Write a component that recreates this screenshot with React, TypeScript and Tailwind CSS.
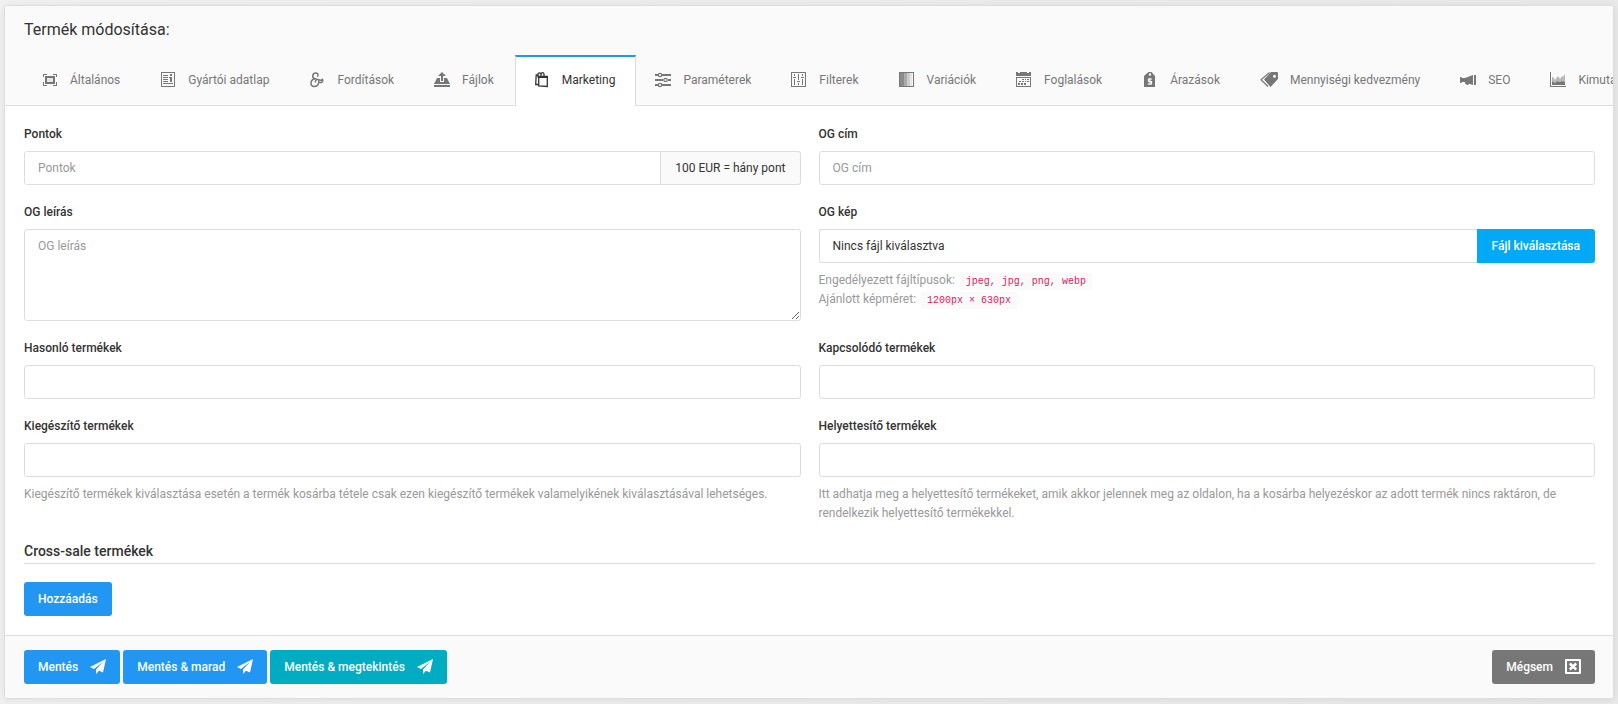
import { useRef, useState } from "react";
import type { ReactNode } from "react";
import clsx from "clsx";

function Icon({ children, width = 16 }: { children: ReactNode; width?: number }) {
  return (
    <svg
      viewBox={`0 0 ${width} 16`}
      width={width}
      height={16}
      fill="currentColor"
      aria-hidden="true"
      className="shrink-0"
    >
      {children}
    </svg>
  );
}

const FrameIcon = () => (
  <Icon>
    <path d="M1 2h4v1H2v2H1zM11 2h4v3h-1V3h-3zM1 10h1v3h3v1H1zM14 10h1v4h-4v-1h3z" />
    <path fillRule="evenodd" d="M3 4h10v8H3zM5 6v4h6V6z" />
    <path d="M5 6h6v4H5z" opacity=".15" />
  </Icon>
);

const ProfileIcon = () => (
  <Icon>
    <path fillRule="evenodd" d="M1 0h14v15H1zM2 1v13h12V1z" />
    <path d="M3 3h5v1H3zM3 5h5v1H3zM3 7h5v1H3zM3 9h5v1H3zM3 11h10v1H3zM10 2h2v2h-2zM9 5h3v5h-2V6H9z" />
  </Icon>
);

const AmpersandIcon = () => (
  <Icon>
    <path
      fill="none"
      stroke="currentColor"
      strokeWidth="1.500"
      strokeLinecap="round"
      strokeLinejoin="round"
      d="M8.800 4.300C9.600 2.300 8.500 1 6.800 1 3.200 1 2.600 6 6 6.800h1M6 6.800C.8 7.800.8 14.600 5 14.600c3.300 0 5-2.600 4.800-5.600M6.300 9.800C6.800 7.600 8.600 7 10.200 7.900c1.300.7 2.800.3 3.300-.7M11 10.500c2 .5 3.300-1.500 2.500-3.300"
    />
  </Icon>
);

const UploadIcon = () => (
  <Icon>
    <path d="M8 0l4 4H9v5H7V4H4zM3 6h3v4h4V6h3l3 6H0zM0 13h16v2H0z" />
  </Icon>
);

const BagIcon = () => (
  <Icon>
    <path
      fill="none"
      stroke="currentColor"
      strokeWidth="1.300"
      d="M4.700 4.500h8.600v10l-8.600-.6zM4.500 12.500H1.700l.5-9.500h2.500M4 5.500V2.500C4 .3 7 .3 7 2.500v3M7 3C7 0 10 0 10 2.500v3"
    />
    <path d="M5 4h9v2H5z" />
  </Icon>
);

const SlidersIcon = () => (
  <Icon>
    <path d="M0 2h3v2H0zM7 2h9v2H7zM0 7h8v2H0zM13 7h3v2h-3zM0 12h3v2H0zM7 12h9v2H7z" />
    <g fill="none" stroke="currentColor" strokeWidth="1.200">
      <circle cx="5" cy="3" r="1.700" />
      <circle cx="10.500" cy="8" r="1.700" />
      <circle cx="5" cy="13" r="1.700" />
    </g>
  </Icon>
);

const EqualizerIcon = () => (
  <Icon>
    <path fillRule="evenodd" d="M0 0h15v15H0zM1 1v13h13V1z" />
    <path d="M3 2h1v2H3zM2 5h3v1H2zM3 7h1v6H3zM7 2h1v6H7zM6 9h3v1H6zM7 11h1v2H7zM11 2h1v2h-1zM10 5h3v1h-3zM11 7h1v6h-1z" />
  </Icon>
);

const GradientIcon = () => (
  <Icon>
    <path fillRule="evenodd" d="M0 0h15v15H0zM1 1v13h13V1z" />
    <path d="M1 1h4v13H1z" opacity=".85" />
    <path d="M5 1h3v13H5z" opacity=".6" />
    <path d="M8 1h3v13H8z" opacity=".35" />
    <path d="M11 1h2v13h-2z" opacity=".15" />
  </Icon>
);

const CalendarIcon = () => (
  <Icon>
    <path d="M0 0h2v1h2V0h7v1h2V0h2v4H0z" />
    <path fillRule="evenodd" d="M0 5h15v10H0zM1 6v8h13V6z" />
    <path d="M6 7h2v1H6zM9 7h1v1H9zM11 7h2v1h-2zM3 9h2v1H3zM6 9h2v1H6zM9 9h1v1H9zM11 9h2v1h-2zM2 11h2v2H2zM5 11h2v2H5zM8 11h2v2H8z" />
  </Icon>
);

const PriceTagIcon = () => (
  <Icon>
    <path
      fillRule="evenodd"
      d="M6.500 0h3L13 4v11H2V4zM8 1.300a1.200 1.200 0 1 0 0 2.400 1.200 1.200 0 0 0 0-2.400z"
    />
    <path
      fill="none"
      stroke="#fafafa"
      strokeWidth="1.200"
      d="M10 7H6.500v2.500h3V12H5.500M8 6v7"
    />
  </Icon>
);

const TagsIcon = () => (
  <Icon width={18}>
    <path
      fillRule="evenodd"
      d="M11 0h6q1 0 1 1v6l-7.500 8L4 7.500zM14.500 2.800a1.500 1.500 0 1 0 0 3 1.500 1.500 0 0 0 0-3z"
    />
    <path
      fill="none"
      stroke="currentColor"
      strokeWidth="1.200"
      d="M9.500.5L1 7.800l7 6.700"
    />
  </Icon>
);

const MegaphoneIcon = () => (
  <Icon>
    <path d="M0 5h1l1 1h3l8-3v10l-4-1.200c-.5 1.700-3 1.700-4-.8V10H2l-1 1H0zM14 3h2v10h-2z" />
  </Icon>
);

const ChartIcon = () => (
  <Icon>
    <path d="M0 0h1v14h15v1H0z" />
    <path d="M2 9l3 2 2-2 3 1 2-1 3 1v3H2z" />
    <path
      d="M2 5l1 0 2 3 3-4 2 3 2-3 1 1 2-3v8l-3-1-2 1-3-1-2 2-3-2z"
      opacity=".5"
    />
  </Icon>
);

const PlaneIcon = () => (
  <Icon>
    <path d="M16 0L0 8l4 2L13.500 2.500 6 10.500V15l3-3.300 4 1.800z" />
  </Icon>
);

const CloseBoxIcon = () => (
  <Icon>
    <path fillRule="evenodd" d="M1 0h14q1 0 1 1v13q0 1-1 1H1q-1 0-1-1V1q0-1 1-1zM2 2v11h12V2z" />
    <path fill="none" stroke="currentColor" strokeWidth="2.400" d="M4.800 4.500l6.400 6M11.200 4.500l-6.400 6" />
  </Icon>
);

const TABS = [
  { label: "Általános", icon: <FrameIcon /> },
  { label: "Gyártói adatlap", icon: <ProfileIcon /> },
  { label: "Fordítások", icon: <AmpersandIcon /> },
  { label: "Fájlok", icon: <UploadIcon /> },
  { label: "Marketing", icon: <BagIcon /> },
  { label: "Paraméterek", icon: <SlidersIcon /> },
  { label: "Filterek", icon: <EqualizerIcon /> },
  { label: "Variációk", icon: <GradientIcon /> },
  { label: "Foglalások", icon: <CalendarIcon /> },
  { label: "Árazások", icon: <PriceTagIcon /> },
  { label: "Mennyiségi kedvezmény", icon: <TagsIcon /> },
  { label: "SEO", icon: <MegaphoneIcon /> },
  { label: "Kimutatások", icon: <ChartIcon /> },
];

const inputClass =
  "block w-full h-[34px] px-[13px] bg-white border border-[#ddd] rounded-[3px] text-[#333] placeholder:text-[#999] outline-none focus:border-[#2196f3]";

const buttonClass =
  "flex items-center gap-[12px] h-[34px] px-[14px] rounded-[3px] font-medium text-white cursor-pointer";

function Field({ id, label, children }: { id: string; label: string; children: ReactNode }) {
  return (
    <div>
      <label htmlFor={id} className="block mb-[7px] font-medium">
        {label}
      </label>
      {children}
    </div>
  );
}

function HelpText({ children }: { children: ReactNode }) {
  return <p className="mt-2 text-[#999]">{children}</p>;
}

function Code({ children }: { children: ReactNode }) {
  return (
    <code className="ml-[2px] px-[6px] py-[3px] bg-[#fafafa] text-[#d81b60] text-[10px] leading-none font-['Liberation_Mono',monospace]">
      {children}
    </code>
  );
}

export default function App() {
  const [activeTab, setActiveTab] = useState("Marketing");
  const [fileName, setFileName] = useState("Nincs fájl kiválasztva");
  const fileRef = useRef<HTMLInputElement>(null);

  return (
    <div className="min-h-screen px-1 py-[5px] bg-linear-to-r from-[#f1f1f1] to-[#e9e9e9] font-[Roboto,sans-serif] text-[12px] leading-[19px] text-[#333]">
      <form
        onSubmit={(e) => e.preventDefault()}
        className="bg-white border border-[#ddd] rounded-[3px] overflow-hidden shadow-[0_1px_8px_rgba(0,0,0,0.08)]"
      >
        <header className="bg-[#fafafa]">
          <h1 className="px-[19px] pt-[11px] pb-[13px] text-[16px] leading-[25px]">
            Termék módosítása:
          </h1>
          <nav className="flex pl-[18px] overflow-hidden shadow-[inset_0_-1px_0_#ddd]">
            {TABS.map((tab) => (
              <button
                key={tab.label}
                type="button"
                onClick={() => setActiveTab(tab.label)}
                className={clsx(
                  "flex shrink-0 items-center gap-[12px] h-[51px] pl-[18px] pr-[20px] pb-[3px] border-x border-t-2 whitespace-nowrap cursor-pointer",
                  activeTab === tab.label
                    ? "bg-white border-x-[#ddd] border-t-[#2196f3] text-[#333]"
                    : "border-transparent text-[#777] hover:text-[#333]"
                )}
              >
                {tab.icon}
                {tab.label}
              </button>
            ))}
          </nav>
        </header>

        <div className="pl-[19px] pr-[18px] py-[19px]">
          <div className="grid grid-cols-2 gap-[18px]">
            <Field id="points" label="Pontok">
              <div className="flex">
                <input
                  id="points"
                  type="text"
                  placeholder="Pontok"
                  className="min-w-0 grow h-[34px] px-[13px] bg-white border border-[#ddd] rounded-l-[3px] placeholder:text-[#999] outline-none"
                />
                <span className="flex items-center px-[14px] bg-[#fafafa] border border-l-0 border-[#ddd] rounded-r-[3px] whitespace-nowrap">
                  100 EUR = hány pont
                </span>
              </div>
            </Field>
            <Field id="og-title" label="OG cím">
              <input id="og-title" type="text" placeholder="OG cím" className={inputClass} />
            </Field>

            <Field id="og-description" label="OG leírás">
              <textarea
                id="og-description"
                placeholder="OG leírás"
                className="block w-full h-[92px] px-[13px] py-[7px] bg-white border border-[#ddd] rounded-[3px] placeholder:text-[#999] outline-none resize-y"
              />
            </Field>
            <Field id="og-image" label="OG kép">
              <div className="flex">
                <span className="flex grow items-center h-[34px] px-[13px] border border-r-0 border-[#ddd] rounded-l-[3px]">
                  {fileName}
                </span>
                <button
                  type="button"
                  onClick={() => fileRef.current?.click()}
                  className="h-[34px] px-[15px] bg-[#03a9f4] rounded-r-[3px] font-medium text-white cursor-pointer"
                >
                  Fájl kiválasztása
                </button>
                <input
                  ref={fileRef}
                  id="og-image"
                  type="file"
                  accept=".jpeg,.jpg,.png,.webp"
                  className="hidden"
                  onChange={(e) => setFileName(e.target.files?.[0]?.name ?? "Nincs fájl kiválasztva")}
                />
              </div>
              <HelpText>
                Engedélyezett fájltípusok: <Code>jpeg, jpg, png, webp</Code>
                <br />
                Ajánlott képméret: <Code>1200px × 630px</Code>
              </HelpText>
            </Field>

            <Field id="similar" label="Hasonló termékek">
              <input id="similar" type="text" className={inputClass} />
            </Field>
            <Field id="related" label="Kapcsolódó termékek">
              <input id="related" type="text" className={inputClass} />
            </Field>

            <Field id="additional" label="Kiegészítő termékek">
              <input id="additional" type="text" className={inputClass} />
              <HelpText>
                Kiegészítő termékek kiválasztása esetén a termék kosárba tétele csak ezen kiegészítő
                termékek valamelyikének kiválasztásával lehetséges.
              </HelpText>
            </Field>
            <Field id="substitute" label="Helyettesítő termékek">
              <input id="substitute" type="text" className={inputClass} />
              <HelpText>
                Itt adhatja meg a helyettesítő termékeket, amik akkor jelennek meg az oldalon, ha a
                kosárba helyezéskor az adott termék nincs raktáron, de rendelkezik helyettesítő
                termékekkel.
              </HelpText>
            </Field>
          </div>

          <h2 className="mt-[18px] pb-[2px] border-b border-[#ddd] text-[14px] leading-[20px] font-medium">
            Cross-sale termékek
          </h2>
          <button type="button" className={clsx(buttonClass, "mt-[18px] bg-[#2196f3]")}>
            Hozzáadás
          </button>
        </div>

        <footer className="flex items-center gap-[3px] pl-[19px] pr-[18px] py-[14px] bg-[#fafafa] border-t border-[#ddd]">
          <button type="submit" className={clsx(buttonClass, "bg-[#2196f3]")}>
            Mentés
            <PlaneIcon />
          </button>
          <button type="submit" className={clsx(buttonClass, "bg-[#2196f3]")}>
            Mentés &amp; marad
            <PlaneIcon />
          </button>
          <button type="submit" className={clsx(buttonClass, "bg-[#00acc1]")}>
            Mentés &amp; megtekintés
            <PlaneIcon />
          </button>
          <button type="button" className={clsx(buttonClass, "ml-auto bg-[#777]")}>
            Mégsem
            <CloseBoxIcon />
          </button>
        </footer>
      </form>
    </div>
  );
}
